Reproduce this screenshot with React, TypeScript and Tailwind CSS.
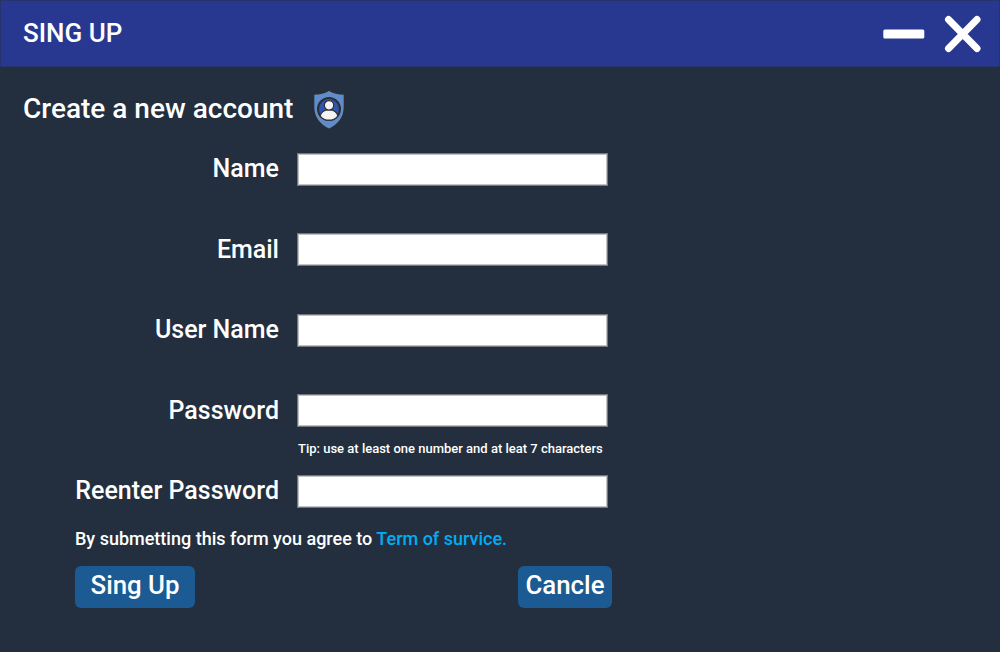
import React from "react";

type FieldProps = { label: string; type?: string; tip?: string };

function Field({ label, type = "text", tip }: FieldProps) {
  return (
    <label className="flex h-[80.5px] items-start">
      <span className="w-[279px] text-right text-[25px] leading-[32px] whitespace-nowrap">
        {label}
      </span>
      <span className="-mt-[0.1px] ml-[18px] flex flex-col">
        <input
          type={type}
          className="h-[33px] w-[311px] border border-[#77777b] bg-white px-2 text-lg text-black shadow-[inset_0_0_0_1px_#c4c4c6] outline-none"
        />
        {tip && <span className="mt-[14px] pl-px text-[13px] leading-4 whitespace-nowrap">{tip}</span>}
      </span>
    </label>
  );
}

function ShieldIcon() {
  return (
    <svg width="34" height="42" viewBox="0 0 34 42" className="-mt-px ml-[19px]">
      <path
        d="M17 1C12.500 3.800 7.500 4.900 1.500 5V18c0 10.500 5.500 17.500 15.500 22.500C27 35.500 32.500 28.500 32.500 18V5C26.500 4.900 21.500 3.800 17 1Z"
        fill="#5f8ccb"
        stroke="#2b2e33"
        strokeWidth="1.600"
        strokeLinejoin="round"
      />
      <circle cx="17" cy="20" r="11" fill="#3155ae" stroke="#2b2e33" strokeWidth="2" />
      <path d="M8.200 27c.7-4.200 4-6.200 8.800-6.200s8.100 2 8.800 6.200c-2.100 2.800-5.300 4.200-8.800 4.200S10.300 29.800 8.200 27Z" fill="#f4f4f5" stroke="#2b2e33" strokeWidth="1.200" />
      <circle cx="17" cy="16.300" r="4.700" fill="#f4f4f5" stroke="#2b2e33" strokeWidth="1.200" />
    </svg>
  );
}

export default function App() {
  return (
    <main className="flex h-[652px] w-[1000px] flex-col overflow-hidden bg-[#232f3e] font-['Roboto',sans-serif] font-medium text-white">
      <header className="flex h-[67px] items-center justify-between border border-[#27346b] bg-[#283890] pr-[17px] pl-[22px]">
        <h1 className="pb-px text-[26px] leading-8 font-medium whitespace-nowrap">SING UP</h1>
        <div className="flex items-center gap-[19px]">
          <button type="button" aria-label="Minimize">
            <svg width="43" height="40" viewBox="0 0 43 40">
              <rect x="1.300" y="15.500" width="41" height="9" rx="1.500" fill="#fff" />
            </svg>
          </button>
          <button type="button" aria-label="Close">
            <svg width="38" height="40" viewBox="0 0 38 40">
              <path d="M4.500 5.500 33 34.500M33 5.500 4.500 34.500" stroke="#fff" strokeWidth="7" strokeLinecap="round" />
            </svg>
          </button>
        </div>
      </header>

      <div className="flex h-[86px] items-start pt-[23px] pl-[23px]">
        <h2 className="text-[28px] leading-[38px] font-medium whitespace-nowrap">Create a new account</h2>
        <ShieldIcon />
      </div>

      <form>
        <Field label="Name" />
        <Field label="Email" />
        <Field label="User Name" />
        <Field label="Password" type="password" tip="Tip: use at least one number and at leat 7 characters" />
        <div className="h-[52px]">
          <Field label="Reenter Password" type="password" />
        </div>
        <p className="pl-[75px] text-[18px] leading-6 whitespace-nowrap">
          By submetting this form you agree to{" "}
          <a href="#" className="text-[#00adf5]">Term of survice.</a>
        </p>
        <div className="mt-[15px] flex w-[612px] justify-between pl-[75px] text-[25.8px]">
          <button type="button" className="h-[42px] w-[120px] rounded-[6px] bg-[#1b5a92] pb-1 leading-[38px]">Sing Up</button>
          <button type="button" className="h-[42px] w-[94px] rounded-[6px] bg-[#1b5a92] pb-1 leading-[38px]">Cancle</button>
        </div>
      </form>
    </main>
  );
}
